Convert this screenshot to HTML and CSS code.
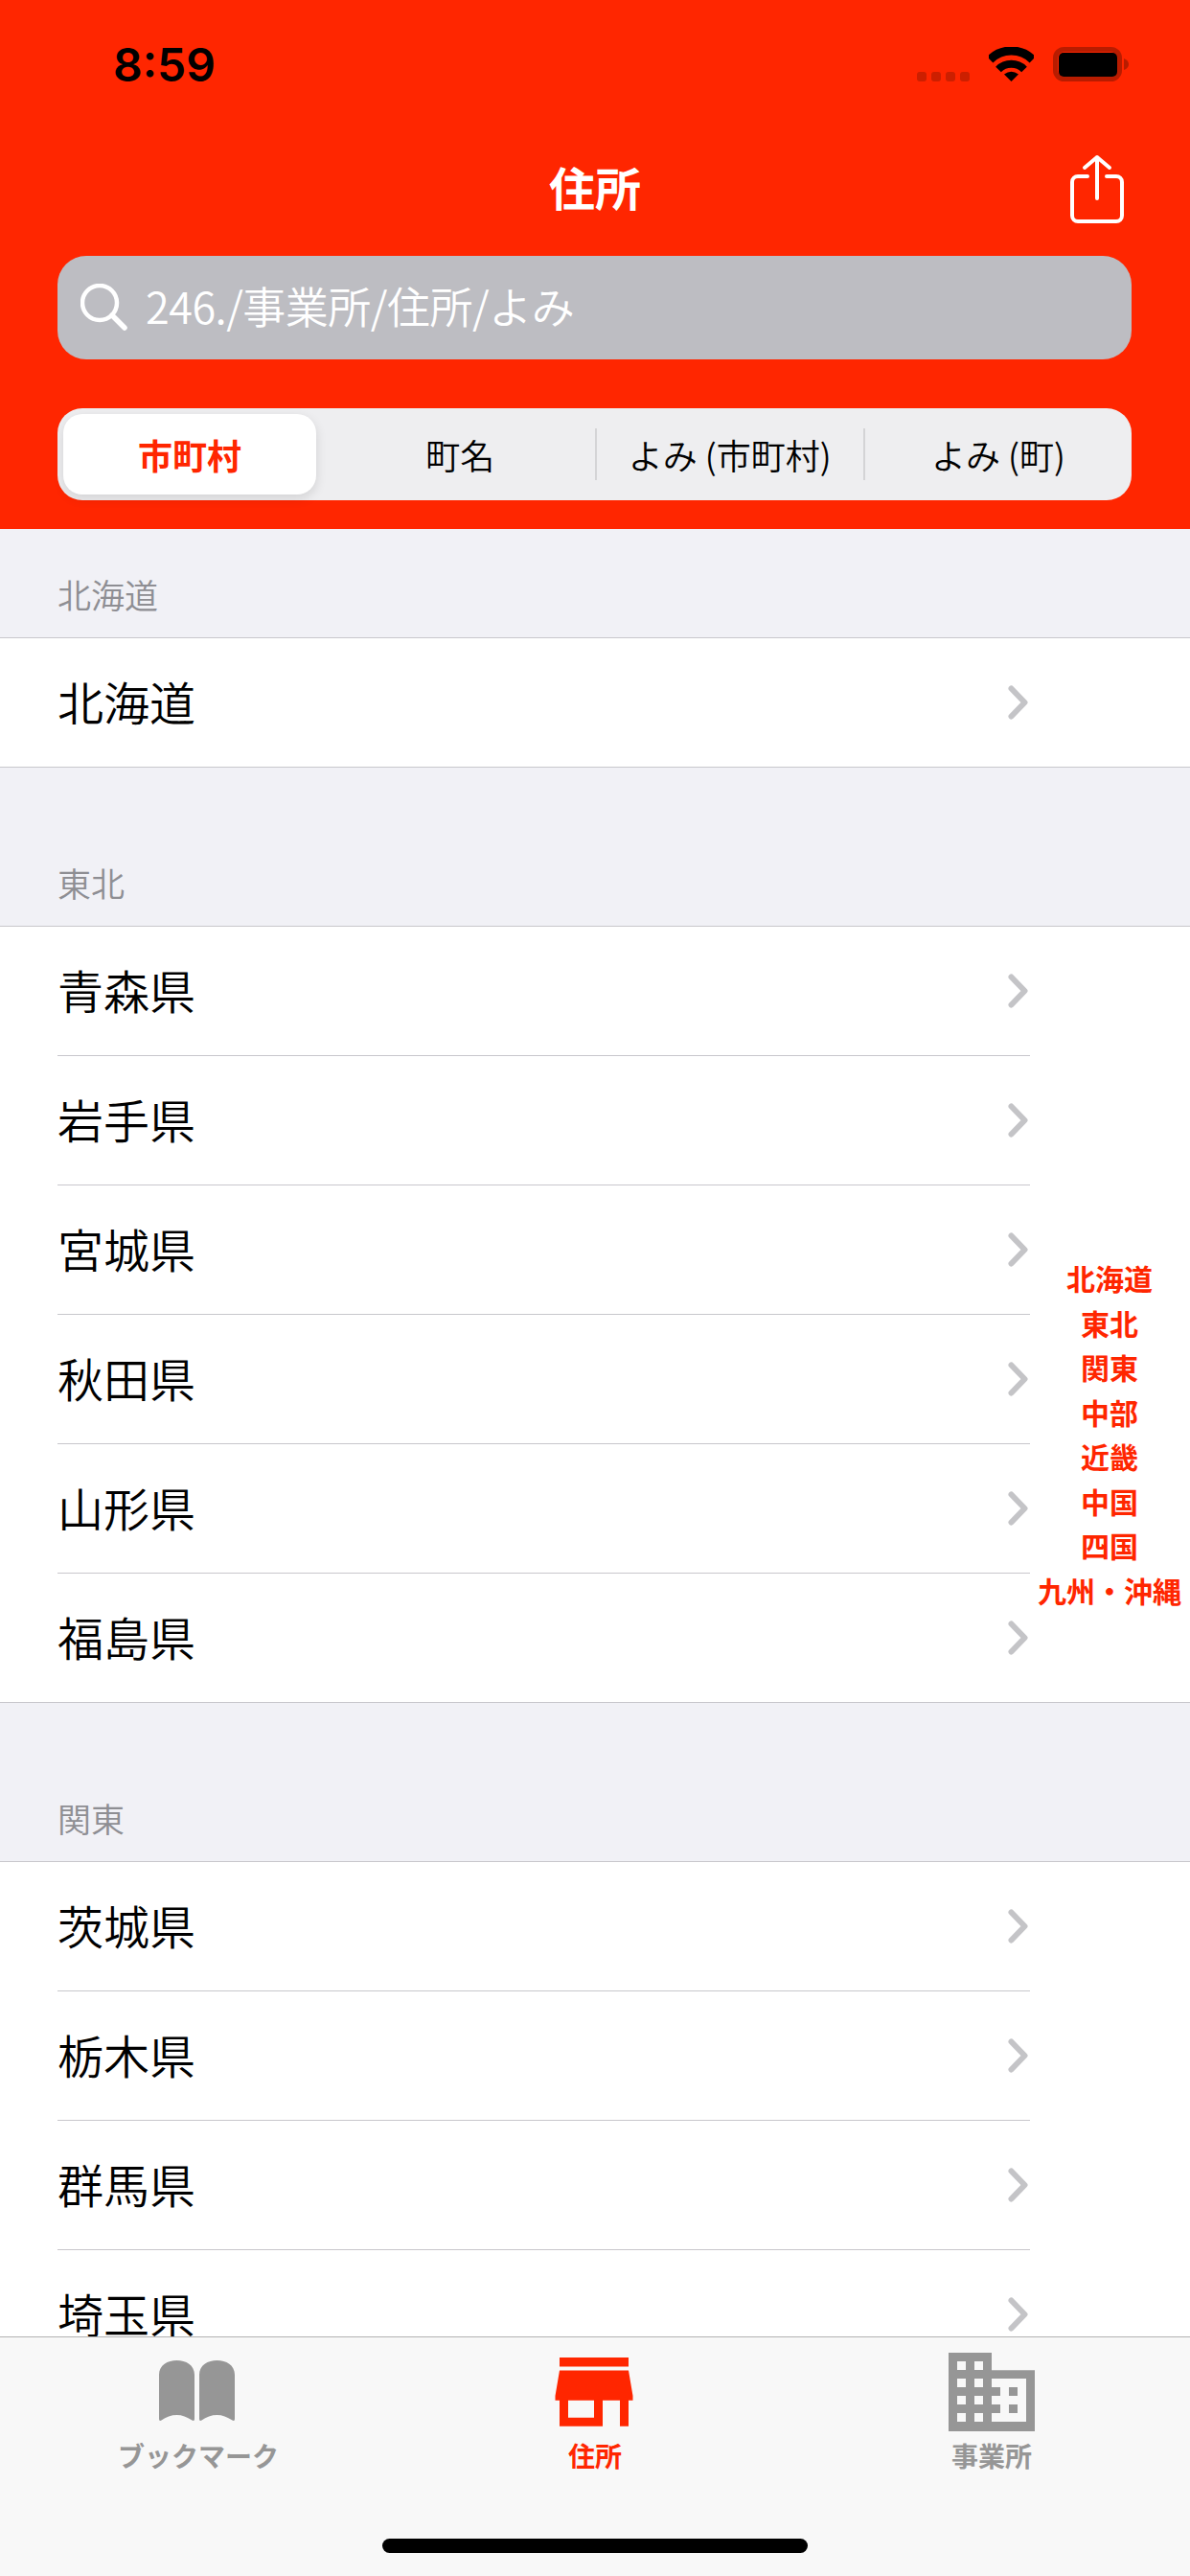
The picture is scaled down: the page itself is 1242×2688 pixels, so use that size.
FILE: index.html
```html
<!DOCTYPE html>
<html lang="ja">
<head>
  <meta charset="UTF-8">
  <title>住所</title>
  <link rel="stylesheet" href="styles.css">
</head>
<body>
  <svg class="sprite">
    <symbol id="chevron" viewBox="0 0 21 36">
      <path d="M3.5 3.5 L17.5 18 L3.5 32.5" fill="none" stroke="#c4c4c7" stroke-width="6" stroke-linecap="round" stroke-linejoin="round"/>
    </symbol>
  </svg>

  <header class="top">
    <div class="status">
      <span class="time">8:59</span>
      <div class="status-icons">
        <svg width="55" height="10" viewBox="0 0 55 10" fill="#cc1f00">
          <rect x="0" width="10" height="10" rx="3"/>
          <rect x="15" width="10" height="10" rx="3"/>
          <rect x="30" width="10" height="10" rx="3"/>
          <rect x="45" width="10" height="10" rx="3"/>
        </svg>
        <svg width="47" height="36" viewBox="0 0 47 36">
          <path d="M1.2 13.2 A31.5 31.5 0 0 1 45.8 13.2" fill="none" stroke="#000" stroke-width="9"/>
          <path d="M10 23.5 A19 19 0 0 1 37 23.5" fill="none" stroke="#000" stroke-width="8"/>
          <path d="M23.5 36 L16 28.5 Q23.5 23 31 28.5 Z" fill="#000"/>
        </svg>
        <svg width="79" height="36" viewBox="0 0 79 36">
          <rect x="2.5" y="2.5" width="67" height="31" rx="9" fill="none" stroke="#b81c00" stroke-width="5"/>
          <rect x="6" y="6" width="61" height="25" rx="5" fill="#000"/>
          <path d="M74 12 Q79 14 79 18 Q79 22 74 24 Z" fill="#b81c00"/>
        </svg>
      </div>
    </div>

    <div class="nav">
      <h1 class="nav-title">住所</h1>
      <svg class="share" width="56" height="72" viewBox="0 0 56 72" fill="none" stroke="#fff" stroke-width="4" stroke-linecap="round" stroke-linejoin="round">
        <path d="M18 23 H8 A6 6 0 0 0 2 29 V64 A6 6 0 0 0 8 70 H48 A6 6 0 0 0 54 64 V29 A6 6 0 0 0 48 23 H38"/>
        <path d="M28 46 V3 M15 14 L28 3 L41 14"/>
      </svg>
    </div>

    <div class="search">
      <svg width="50" height="50" viewBox="0 0 50 50" fill="none" stroke="#fff" stroke-linecap="round">
        <circle cx="20" cy="20" r="18" stroke-width="4.5"/>
        <path d="M33 33 L46 46" stroke-width="5.5"/>
      </svg>
      <span class="search-text">246./事業所/住所/よみ</span>
    </div>

    <div class="segments">
      <div class="seg seg-active">市町村</div>
      <div class="seg">町名</div>
      <div class="seg seg-line">よみ (市町村)</div>
      <div class="seg seg-line">よみ (町)</div>
    </div>
  </header>

  <main class="list">
    <section class="section">
      <h2 class="section-head">北海道</h2>
      <div class="rows">
        <div class="row"><span class="row-text">北海道</span><svg class="chev"><use href="#chevron"/></svg></div>
      </div>
    </section>

    <section class="section">
      <h2 class="section-head">東北</h2>
      <div class="rows">
        <div class="row"><span class="row-text">青森県</span><svg class="chev"><use href="#chevron"/></svg></div>
        <div class="row"><span class="row-text">岩手県</span><svg class="chev"><use href="#chevron"/></svg></div>
        <div class="row"><span class="row-text">宮城県</span><svg class="chev"><use href="#chevron"/></svg></div>
        <div class="row"><span class="row-text">秋田県</span><svg class="chev"><use href="#chevron"/></svg></div>
        <div class="row"><span class="row-text">山形県</span><svg class="chev"><use href="#chevron"/></svg></div>
        <div class="row"><span class="row-text">福島県</span><svg class="chev"><use href="#chevron"/></svg></div>
      </div>
    </section>

    <section class="section">
      <h2 class="section-head">関東</h2>
      <div class="rows">
        <div class="row"><span class="row-text">茨城県</span><svg class="chev"><use href="#chevron"/></svg></div>
        <div class="row"><span class="row-text">栃木県</span><svg class="chev"><use href="#chevron"/></svg></div>
        <div class="row"><span class="row-text">群馬県</span><svg class="chev"><use href="#chevron"/></svg></div>
        <div class="row"><span class="row-text">埼玉県</span><svg class="chev"><use href="#chevron"/></svg></div>
      </div>
    </section>
  </main>

  <nav class="index">
    <span>北海道</span>
    <span>東北</span>
    <span>関東</span>
    <span>中部</span>
    <span>近畿</span>
    <span>中国</span>
    <span>四国</span>
    <span>九州・沖縄</span>
  </nav>

  <footer class="tabs">
    <div class="tab">
      <svg width="92" height="90" viewBox="0 0 92 90" fill="#969696">
        <path d="M5 28 C5 18 14 13 23.5 13 C33 13 42 18 42 28 V74 Q42 76.8 39.5 75.5 C34 72 29 70 23.5 70 C18 70 12 72 7.5 75.5 Q5 76.8 5 74 Z"/>
        <path d="M47 28 C47 18 56 13 65.5 13 C75 13 84 18 84 28 V74 Q84 76.8 81.5 75.5 C76 72 71 70 65.5 70 C60 70 54 72 49.5 75.5 Q47 76.8 47 74 Z"/>
      </svg>
      <span class="tab-label">ブックマーク</span>
    </div>
    <div class="tab tab-active">
      <svg width="92" height="90" viewBox="0 0 92 90" fill="#ff2600">
        <path d="M9 10 H81 V19.5 H9 Z"/>
        <path fill-rule="evenodd" d="M9 23.5 H81 L85.5 50 V54.7 H81 V81.7 H72 V54.7 H54 V81.7 H9 V54.7 H4.5 V50 Z M18 54.7 V72.7 H45 V54.7 Z"/>
      </svg>
      <span class="tab-label">住所</span>
    </div>
    <div class="tab">
      <svg width="92" height="90" viewBox="0 0 92 90" fill="#969696">
        <path fill-rule="evenodd" d="M1 5 H46 V23.3 H91 V87 H1 Z
          M10 14 V23 H19 V14 Z M28 14 V23 H37 V14 Z
          M10 32 V41 H19 V32 Z M28 32 V41 H37 V32 Z
          M10 50 V59 H19 V50 Z M28 50 V59 H37 V50 Z
          M10 68 V77 H19 V68 Z M28 68 V77 H37 V68 Z
          M46 32 V41 H55 V50 H46 V59 H55 V68 H46 V77 H82 V32 Z
          M64 41 H73 V50 H64 Z M64 59 H73 V68 H64 Z"/>
      </svg>
      <span class="tab-label">事業所</span>
    </div>
    <div class="home-bar"></div>
  </footer>
</body>
</html>
```

FILE: styles.css
```css
body {
  margin: 0;
  width: 1242px;
  height: 2688px;
  display: flex;
  flex-direction: column;
  overflow: hidden;
  position: relative;
  background-color: #f1f1f6;
  font-family: "Noto Sans CJK JP", "Noto Sans", sans-serif;
  color: #000;
}

.sprite {
  display: none;
}

.top {
  height: 552px;
  flex-shrink: 0;
  background-color: #ff2600;
  box-sizing: border-box;
}

.status {
  height: 136px;
  padding: 0 64px 0 118px;
  display: flex;
  justify-content: space-between;
  align-items: center;
}

.time {
  font-family: Inter, "Liberation Sans", sans-serif;
  font-size: 48px;
  font-weight: 600;
  line-height: 1;
}

.status-icons {
  display: flex;
  align-items: flex-end;
  gap: 20px;
  margin-top: -2px;
}

.status-icons svg {
  display: block;
}

.nav {
  height: 122px;
  padding: 0 69px;
  display: grid;
  grid-template-columns: 1fr auto 1fr;
  align-items: center;
}

.nav-title {
  grid-column: 2;
  margin: 0 0 6px;
  color: #fff;
  font-size: 48px;
  font-weight: 700;
  line-height: 1;
}

.share {
  justify-self: end;
}

.search {
  height: 108px;
  margin: 9px 61px 0 60px;
  padding-left: 24px;
  display: flex;
  align-items: center;
  gap: 18px;
  background-color: #bdbdc2;
  border-radius: 30px;
}

.search-text {
  margin-bottom: 6px;
  color: #fff;
  font-size: 45px;
  font-weight: 350;
  letter-spacing: -0.5px;
  line-height: 1;
}

.segments {
  height: 96px;
  margin: 51px 61px 0 60px;
  display: grid;
  grid-template-columns: repeat(4, 1fr);
  align-items: center;
  background-color: #eeeef0;
  border-radius: 26px;
  font-size: 36px;
  font-weight: 350;
}

.seg {
  height: 54px;
  display: flex;
  align-items: center;
  justify-content: center;
}

.seg-line {
  border-left: 2px solid #d4d4d6;
}

.seg-active {
  height: 84px;
  margin: 0 10px 0 6px;
  background-color: #fff;
  border-radius: 20px;
  box-shadow: 0 4px 12px rgba(0, 0, 0, 0.12);
  color: #ff2600;
  font-weight: 700;
}

.list {
  flex: 1;
  min-height: 0;
  overflow: hidden;
}

.section + .section {
  margin-top: 52px;
}

.section-head {
  height: 113px;
  margin: 0;
  padding: 0 0 23px 60px;
  box-sizing: border-box;
  display: flex;
  align-items: flex-end;
  color: #8e8e93;
  font-size: 35px;
  font-weight: 350;
  line-height: 44px;
}

.rows {
  background-color: #fff;
  border-top: 1px solid #c8c7cc;
  border-bottom: 1px solid #c8c7cc;
}

.row {
  height: 134px;
  margin: 0 167px 0 60px;
  display: flex;
  align-items: center;
  justify-content: space-between;
  border-bottom: 1px solid #c8c7cc;
  font-size: 48px;
  font-weight: 350;
}

.row:last-child {
  border-bottom: none;
}

.row-text {
  margin-bottom: 4px;
}

.chev {
  width: 21px;
  height: 36px;
  margin-right: 2px;
}

.index {
  position: absolute;
  top: 1310px;
  right: 4px;
  width: 160px;
  display: flex;
  flex-direction: column;
  align-items: center;
  color: #ff2600;
  font-size: 30px;
  font-weight: 700;
  line-height: 46.5px;
}

.tabs {
  height: 250px;
  flex-shrink: 0;
  box-sizing: border-box;
  padding-top: 11px;
  display: grid;
  grid-template-columns: repeat(3, 1fr);
  align-content: start;
  background-color: #f8f8f8;
  border-top: 1px solid #b2b2b2;
  position: relative;
}

.tab {
  display: flex;
  flex-direction: column;
  align-items: center;
  color: #969696;
}

.tab svg {
  display: block;
}

.tab-label {
  font-size: 28px;
  font-weight: 700;
  line-height: 44px;
}

.tab-active {
  color: #ff2600;
}

.home-bar {
  position: absolute;
  left: 399px;
  bottom: 24px;
  width: 444px;
  height: 15px;
  background-color: #000;
  border-radius: 8px;
}
```
